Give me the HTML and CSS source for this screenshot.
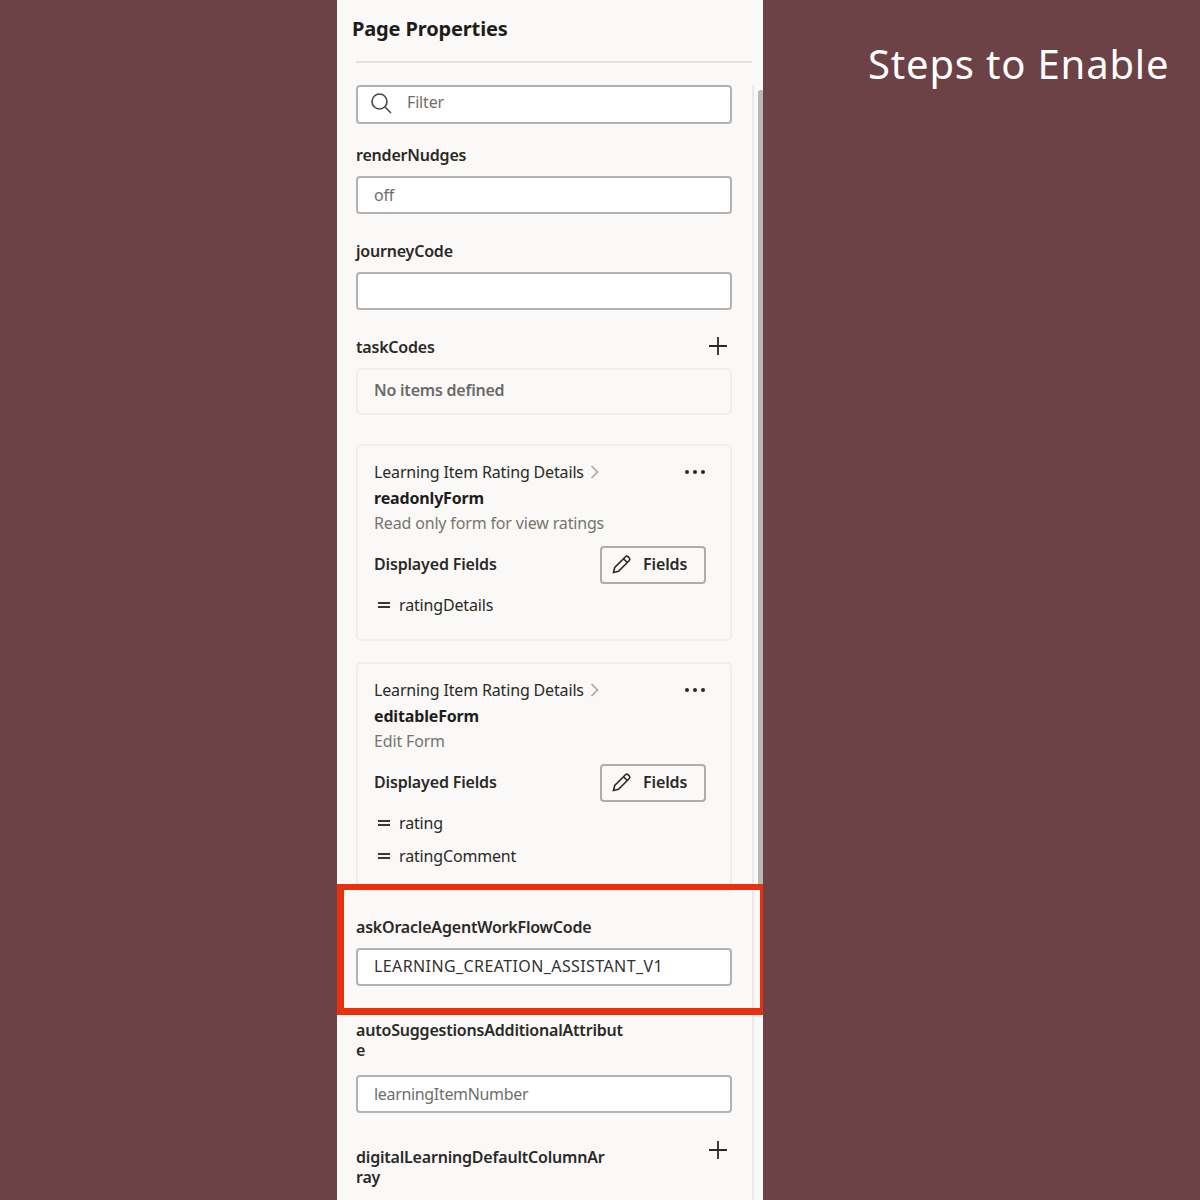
FILE: index.html
```html
<!DOCTYPE html>
<html lang="en">

<head>
  <meta charset="UTF-8" />
  <title>Steps to Enable</title>
  <link rel="stylesheet" href="styles.css">
</head>

<body>
  <div class="panel">
    <h2 class="panel-title">Page Properties</h2>
    <div class="divider"></div>

    <div class="scroll-area">
      <div class="fields">
        <div class="input filter">
          <svg class="search-icon" width="22" height="22" viewBox="0 0 22 22" fill="none" stroke="#4a4846" stroke-width="1.6">
            <circle cx="9.5" cy="9.5" r="7.5" />
            <path d="M15 15l6 6" />
          </svg>
          <span class="muted filter-text">Filter</span>
        </div>

        <div class="label field-first">renderNudges</div>
        <div class="input muted">off</div>

        <div class="label">journeyCode</div>
        <div class="input"></div>

        <div class="label label-row">
          <span>taskCodes</span>
          <svg class="plus" width="20" height="20" viewBox="0 0 20 20" stroke="#2b2926" stroke-width="1.8">
            <path d="M10 1v18M1 10h18" />
          </svg>
        </div>
        <div class="empty-box">No items defined</div>

        <div class="card card-first">
          <div class="card-head">
            <span>Learning Item Rating Details</span>
            <svg class="chevron" width="9" height="14" viewBox="0 0 9 14" fill="none" stroke="#a8a6a3" stroke-width="1.6">
              <path d="M1.5 1l6 6-6 6" />
            </svg>
            <span class="dots"><i></i><i></i><i></i></span>
          </div>
          <div class="card-name">readonlyForm</div>
          <div class="card-desc">Read only form for view ratings</div>
          <div class="card-row">
            <span class="card-sub">Displayed Fields</span>
            <button class="fields-btn">
              <svg width="20" height="20" viewBox="0 0 20 20" fill="none" stroke="#2b2926" stroke-width="1.6">
                <path d="M1.5 18.5l1.2-5L13.5 2.7a1.8 1.8 0 0 1 2.5 0l1.3 1.3a1.8 1.8 0 0 1 0 2.5L6.5 17.3z" />
                <path d="M11.5 4.7l3.8 3.8" />
              </svg>
              Fields
            </button>
          </div>
          <div class="field-item"><span class="grip"></span>ratingDetails</div>
        </div>

        <div class="card card-second">
          <div class="card-head">
            <span>Learning Item Rating Details</span>
            <svg class="chevron" width="9" height="14" viewBox="0 0 9 14" fill="none" stroke="#a8a6a3" stroke-width="1.6">
              <path d="M1.5 1l6 6-6 6" />
            </svg>
            <span class="dots"><i></i><i></i><i></i></span>
          </div>
          <div class="card-name">editableForm</div>
          <div class="card-desc">Edit Form</div>
          <div class="card-row">
            <span class="card-sub">Displayed Fields</span>
            <button class="fields-btn">
              <svg width="20" height="20" viewBox="0 0 20 20" fill="none" stroke="#2b2926" stroke-width="1.6">
                <path d="M1.5 18.5l1.2-5L13.5 2.7a1.8 1.8 0 0 1 2.5 0l1.3 1.3a1.8 1.8 0 0 1 0 2.5L6.5 17.3z" />
                <path d="M11.5 4.7l3.8 3.8" />
              </svg>
              Fields
            </button>
          </div>
          <div class="field-item"><span class="grip"></span>rating</div>
          <div class="field-item"><span class="grip"></span>ratingComment</div>
        </div>

        <div class="label label-after-card">askOracleAgentWorkFlowCode</div>
        <div class="input input-code">LEARNING_CREATION_ASSISTANT_V1</div>

        <div class="label label-wrap">autoSuggestionsAdditionalAttribut<br>e</div>
        <div class="input input-name muted">learningItemNumber</div>

        <div class="label label-wrap label-row">
          <span>digitalLearningDefaultColumnAr<br>ray</span>
          <svg class="plus plus-top" width="20" height="20" viewBox="0 0 20 20" stroke="#2b2926" stroke-width="1.8">
            <path d="M10 1v18M1 10h18" />
          </svg>
        </div>
      </div>
      <div class="track"></div>
      <div class="scrollbar"></div>
    </div>

    <div class="highlight"></div>
  </div>

  <div class="side">
    <h1 class="side-title">Steps to Enable</h1>
  </div>
</body>

</html>
```

FILE: styles.css
```css
* {
  box-sizing: border-box;
}

html,
body {
  height: 1200px;
  overflow: hidden;
}

body {
  margin: 0;
  padding-left: 337px;
  display: flex;
  background: #6d4246;
  font-family: 'Noto Sans', sans-serif;
  color: #2b2926;
}

.panel {
  position: relative;
  width: 426px;
  height: 1200px;
  background: #faf9f7;
  overflow: hidden;
  flex-shrink: 0;
  letter-spacing: -0.16px;
}

.panel-title {
  margin: 0;
  padding: 16px 0 0 15px;
  height: 61px;
  font-size: 20px;
  line-height: 26px;
  font-weight: 700;
  letter-spacing: -0.14px;
  color: #1f1d1b;
}

.divider {
  height: 2px;
  margin: 0 11px 0 19px;
  background: #e4e2df;
}

.scroll-area {
  display: flex;
  margin-top: 22px;
  padding-left: 19px;
}

.fields {
  width: 376px;
  flex-shrink: 0;
}

.track {
  width: 2px;
  height: 1115px;
  margin-left: 20px;
  background: #eceae7;
}

.scrollbar {
  width: 5px;
  height: 795px;
  margin: 5px 0 0 4px;
  background: #b9b8b6;
  border-radius: 3px 0 0 0;
}

.input {
  display: flex;
  align-items: center;
  height: 38px;
  padding: 0 16px 1px;
  background: #fff;
  border: 2px solid #b3b2b0;
  border-radius: 4px;
  font-size: 16px;
}

.filter {
  height: 39px;
  padding-left: 12px;
  padding-bottom: 4px;
}

.search-icon {
  margin-right: 15px;
}

.filter-text {
  margin-bottom: 2px;
}

.muted {
  color: #6f6e6c;
}

.input-code {
  padding-bottom: 2px;
  color: #33312e;
  letter-spacing: 0.4px;
}

.input-name {
  letter-spacing: -0.33px;
}

.label {
  margin-top: 27px;
  margin-bottom: 11px;
  font-size: 16px;
  line-height: 20px;
  font-weight: 600;
  letter-spacing: -0.2px;
  color: #2b2926;
}

.field-first {
  margin-top: 21px;
}

.label-after-card {
  margin-top: 25px;
}

.label-wrap {
  margin-top: 34px;
  margin-bottom: 15px;
}

.label-row {
  position: relative;
  display: flex;
  justify-content: space-between;
}

.plus {
  position: absolute;
  right: 4px;
  top: -1px;
}

.plus-top {
  top: -7px;
}

.empty-box {
  height: 47px;
  display: flex;
  align-items: center;
  padding: 0 16px 4px;
  border: 2px solid #f0eeeb;
  border-radius: 5px;
  font-size: 16px;
  font-weight: 600;
  letter-spacing: -0.22px;
  color: #6b6a68;
}

.card {
  padding: 13px 24px 0 16px;
  border: 2px solid #f0eeeb;
  border-radius: 5px;
  font-size: 16px;
}

.card-first {
  height: 197px;
  margin-top: 29px;
}

.card-second {
  height: 230px;
  margin-top: 21px;
}

.card-head {
  display: flex;
  align-items: center;
  height: 26px;
}

.chevron {
  margin-left: 6px;
}

.dots {
  display: flex;
  gap: 4px;
  margin-left: auto;
  margin-right: 1px;
}

.dots i {
  width: 4px;
  height: 4px;
  border-radius: 50%;
  background: #2b2926;
}

.card-name {
  height: 26px;
  line-height: 26px;
  font-weight: 700;
  color: #1f1d1b;
}

.card-desc {
  height: 24px;
  line-height: 24px;
  color: #77756f;
}

.card-row {
  display: flex;
  align-items: center;
  justify-content: space-between;
  margin-top: 11px;
  margin-bottom: 10px;
}

.card-sub {
  font-weight: 600;
  padding-bottom: 2px;
}

.fields-btn {
  display: flex;
  align-items: center;
  gap: 11px;
  width: 106px;
  height: 38px;
  padding: 0 0 2px 10px;
  background: transparent;
  border: 2px solid #aeadab;
  border-radius: 4px;
  font-family: inherit;
  font-size: 16px;
  font-weight: 600;
  letter-spacing: -0.12px;
  color: #2b2926;
}

.field-item {
  display: flex;
  align-items: center;
  height: 33px;
  line-height: 20px;
  margin-top: -6px;
  margin-bottom: 6px;
}

.grip {
  width: 12px;
  height: 6px;
  margin: 0 9px 0 4px;
  border-top: 2px solid #3a3835;
  border-bottom: 2px solid #3a3835;
}

/* red box drawn over the panel */
.highlight {
  position: absolute;
  left: 0;
  right: 0;
  top: 884px;
  height: 131px;
  border: solid #e8300f;
  border-width: 6px 3px 7px 7px;
}

.side {
  flex: 1;
  padding: 38px 0 0 105px;
}

.side-title {
  margin: 0;
  font-size: 40px;
  line-height: 52px;
  font-weight: 400;
  letter-spacing: 0.82px;
  color: #fff;
  white-space: nowrap;
}
```
